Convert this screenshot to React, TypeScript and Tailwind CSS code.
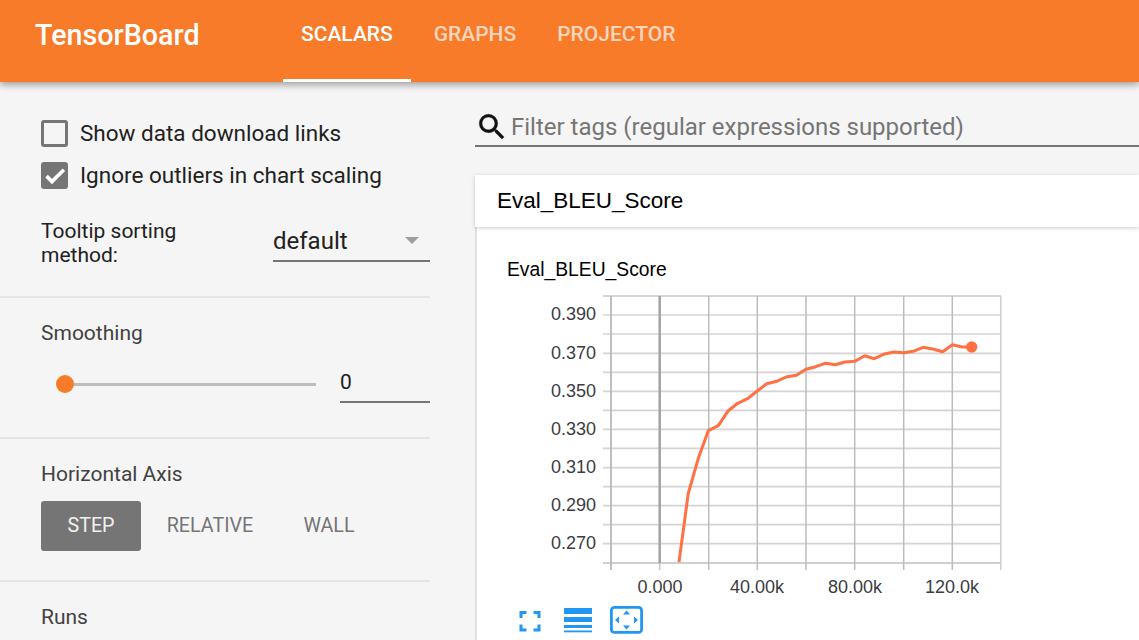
export default function App() {
  const tabs = [
    { label: "SCALARS", active: true },
    { label: "GRAPHS", active: false },
    { label: "PROJECTOR", active: false },
  ];
  const hLines = [315, 334, 353.3, 372.3, 391.3, 410.3, 429.3, 448.3, 467.7, 486.7, 505.7, 524.7, 543.7];
  const vLines = [708.7, 757.3, 806, 854.7, 903.7, 952.3];
  const yLabels = [
    ["0.390", 314.2],
    ["0.370", 353.3],
    ["0.350", 391.3],
    ["0.330", 429.3],
    ["0.310", 467.7],
    ["0.290", 505.7],
    ["0.270", 543.7],
  ] as const;
  const xLabels = [
    ["0.000", 660],
    ["40.00k", 757],
    ["80.00k", 855],
    ["120.0k", 952],
  ] as const;
  const pts =
    "679,562 688.3,493.3 698.3,458.3 708.3,430.7 718.3,425.7 728.3,410.7 737.7,403.3 748,398.3 757.3,391 766.7,383.7 776.7,381.3 786,377 796.3,375.3 806,369.3 815.7,366.7 825.3,363.3 835.3,364.7 845,362 855,361.3 864.7,355.7 874.3,358.7 884.3,354 894,352 903.7,352.7 913.3,351.3 923,347.3 932.7,349 942.7,351.7 952.3,344.7 962,347 971.7,347";

  return (
    <div className="h-[640px] w-[1139px] overflow-hidden bg-[#f5f5f5] flex flex-col font-['Roboto',sans-serif]">
      <header className="h-[82px] shrink-0 bg-[#f87b29] flex pl-[35px] shadow-[0_3px_7px_rgba(0,0,0,0.35)] relative z-10">
        <div className="w-[248px] pt-[16px] text-[28.7px] leading-[38px] font-medium text-white">TensorBoard</div>
        <nav className="flex gap-[5px]">
          {tabs.map((t) => (
            <div
              key={t.label}
              className={
                t.active
                  ? "px-[18px] pt-[20px] text-[21px] leading-[29px] font-medium text-white border-b-[3px] border-white"
                  : "px-[18px] pt-[20px] text-[21px] leading-[29px] font-medium text-white/70"
              }
            >
              {t.label}
            </div>
          ))}
        </nav>
      </header>

      <div className="flex flex-1 min-h-0">
        <aside className="w-[430px] shrink-0">
          <section className="h-[216px] pl-[41px] pt-[38px] border-b-2 border-[#e4e4e4]">
            <label className="flex items-center h-[27px] gap-[12px] text-[22.5px] text-[#212121]">
              <span className="w-[27px] h-[27px] border-[3px] border-[#757575] rounded-[3px]" />
              Show data download links
            </label>
            <label className="flex items-center h-[27px] mt-[15px] gap-[12px] text-[22.5px] text-[#212121]">
              <span className="w-[27px] h-[27px] bg-[#757575] rounded-[3px] flex items-center justify-center">
                <svg width="24" height="24" viewBox="0 0 24 24">
                  <path d="M9 16.17 4.83 12l-1.42 1.41L9 19 21 7l-1.41-1.41z" fill="#fff" stroke="#fff" strokeWidth="1.6" />
                </svg>
              </span>
              Ignore outliers in chart scaling
            </label>
            <div className="flex mt-[29px]">
              <div className="w-[232px] text-[21px] leading-[24px] text-[#212121] pt-[1px]">
                Tooltip sorting
                <br />
                method:
              </div>
              <div className="w-[157px] h-[44px] pt-[3px] border-b-2 border-[#757575] flex items-center justify-between pr-[11px] text-[24px] text-[#212121]">
                default
                <span className="w-0 h-0 border-l-[7.5px] border-r-[7.5px] border-t-[7.5px] border-l-transparent border-r-transparent border-t-[#9e9e9e]" />
              </div>
            </div>
          </section>

          <section className="h-[141px] pl-[41px] pt-[22px] border-b-2 border-[#e4e4e4]">
            <div className="text-[21px] leading-[26px] text-[#424242]">Smoothing</div>
            <div className="flex mt-[17px]">
              <div className="w-[299px] h-[42px] flex items-center pl-[15px]">
                <span className="w-[18px] h-[18px] rounded-full bg-[#f87b29] shrink-0" />
                <span className="w-[242px] h-[3px] bg-[#bdbdbd]" />
              </div>
              <div className="w-[90px] h-[40px] border-b-2 border-[#757575] text-[21px] leading-[38px] text-[#212121]">0</div>
            </div>
          </section>

          <section className="h-[143px] pl-[41px] pt-[22px] border-b-2 border-[#e4e4e4]">
            <div className="text-[21px] leading-[26px] text-[#424242]">Horizontal Axis</div>
            <div className="flex mt-[14px] text-[19.7px] font-normal">
              <div className="w-[100px] h-[50px] rounded-[3px] bg-[#757575] text-white/90 flex items-center justify-center">STEP</div>
              <div className="w-[138px] h-[50px] text-[#757575] flex items-center justify-center">RELATIVE</div>
              <div className="w-[100px] h-[50px] text-[#757575] flex items-center justify-center">WALL</div>
            </div>
          </section>

          <section className="pl-[41px] pt-[22px]">
            <div className="text-[21px] leading-[26px] text-[#424242]">Runs</div>
          </section>
        </aside>

        <main className="flex-1 min-w-0 pl-[45px] pt-[30px]">
          <div className="h-[35px] pb-[4px] border-b-2 border-[#757575] flex items-center gap-[2px]">
            <svg width="34" height="34" viewBox="0 0 24 24" className="shrink-0">
              <path
                fill="#111"
                stroke="#111"
                strokeWidth="0.3"
                d="M15.5 14h-.79l-.28-.27A6.47 6.47 0 0 0 16 9.5 6.5 6.5 0 1 0 9.5 16c1.61 0 3.09-.59 4.23-1.57l.27.28v.79l5 4.99L20.49 19l-4.99-5zm-6 0C7.01 14 5 11.99 5 9.5S7.01 5 9.5 5 14 7.01 14 9.5 11.99 14 9.5 14z"
              />
            </svg>
            <span className="text-[24px] text-[#757575] whitespace-nowrap">Filter tags (regular expressions supported)</span>
          </div>

          <div className="mt-[28px] h-[52px] bg-white flex items-center pl-[22px] text-[22.5px] text-black font-['Liberation_Sans',sans-serif] shadow-[0_1px_4px_rgba(0,0,0,0.2)] relative">
            Eval_BLEU_Score
          </div>

          <div className="bg-white border-l-2 border-[#e0e0e0] h-[420px]">
            <div className="pl-[30px] pt-[30px] text-[19.3px] leading-[26px] text-black font-['Liberation_Sans',sans-serif]">Eval_BLEU_Score</div>
            <svg width="510" height="312" viewBox="510 288 510 312" className="ml-[33px] mt-[5px]" fontFamily="'Liberation Sans', sans-serif" fontSize="18" fill="#3c3c43">
              <line x1="603" x2="1001" y1="296" y2="296" stroke="#d6d6d6" strokeWidth="2" />
              {hLines.map((y) => (
                <line key={y} x1="603" x2="1001" y1={y} y2={y} stroke="#d4d4d4" strokeWidth="1.7" />
              ))}
              <line x1="603" x2="1001" y1="563" y2="563" stroke="#cfcfcf" strokeWidth="2" />
              {vLines.map((x) => (
                <line key={x} x1={x} x2={x} y1="296" y2="570" stroke="#bcbcbc" strokeWidth="1.5" />
              ))}
              <line x1="611" x2="611" y1="296" y2="570" stroke="#b8b8b8" strokeWidth="1.8" />
              <line x1="1000.7" x2="1000.7" y1="296" y2="570" stroke="#cfcfcf" strokeWidth="1.5" />
              <line x1="659.7" x2="659.7" y1="296" y2="563" stroke="#a3a3a3" strokeWidth="2.5" />
              <line x1="659.7" x2="659.7" y1="563" y2="570" stroke="#c4c4c4" strokeWidth="1.5" />
              <polyline points={pts} fill="none" stroke="#ff7043" strokeWidth="3" strokeLinejoin="round" />
              <circle cx="971.7" cy="347" r="5.7" fill="#ff7043" />
              {yLabels.map(([t, y]) => (
                <text key={t} x="596" y={y + 5.5} textAnchor="end">
                  {t}
                </text>
              ))}
              {xLabels.map(([t, x]) => (
                <text key={t} x={x} y="592.5" textAnchor="middle">
                  {t}
                </text>
              ))}
            </svg>
            <div className="flex items-start ml-[41px] mt-[6px]">
              <svg width="24" height="24" viewBox="0 0 24 24" className="mt-[3px]">
                <path fill="none" stroke="#2196f3" strokeWidth="3" d="M3 9V3.5h5.5M15.5 3.5H21V9M21 15.5V21h-5.5M8.5 21H3v-5.5" />
              </svg>
              <svg width="28" height="26" viewBox="0 0 28 26" className="ml-[22px] mt-[2px]">
                <rect x="0" y="0" width="28" height="6" fill="#2196f3" />
                <rect x="0" y="9" width="28" height="5" fill="#2196f3" />
                <rect x="0" y="17" width="28" height="3" fill="#2196f3" />
                <rect x="0" y="22.5" width="28" height="1.8" fill="#2196f3" />
              </svg>
              <svg width="33" height="28" viewBox="0 0 33 28" className="ml-[18px]">
                <rect x="1.4" y="1.4" width="30.2" height="25" rx="3" fill="none" stroke="#2196f3" strokeWidth="2.8" />
                <path fill="#2196f3" d="M16.5 4.5l3.5 4h-7zM16.5 23.5l3.5-4h-7zM5 14l4-3.5v7zM28 14l-4-3.5v7z" />
              </svg>
            </div>
          </div>
        </main>
      </div>
    </div>
  );
}
